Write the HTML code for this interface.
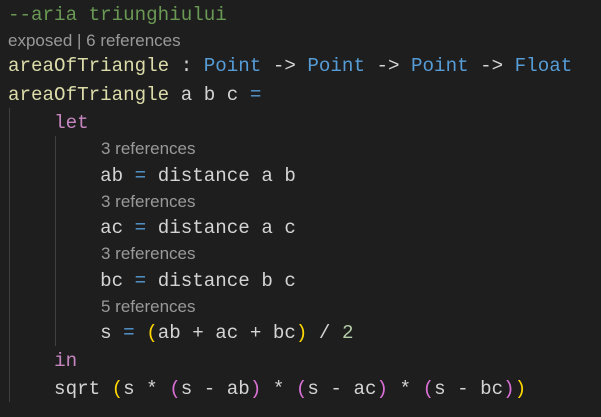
<!DOCTYPE html>
<html><head><style>
body{margin:0;background:#1e1e1e;width:601px;height:417px;overflow:hidden;position:relative}
.l{position:absolute;left:8px;font-family:"Liberation Mono",monospace;font-size:19.2px;white-space:pre;color:#d4d4d4;line-height:28px}
.c{position:absolute;font-family:"Liberation Sans",sans-serif;font-size:17px;color:#999;white-space:pre;line-height:20px}
.f{color:#dcdcaa}.t{color:#569cd6}.k{color:#c586c0}.cm{color:#6a9955}.n{color:#b5cea8}
.y{color:#ffd700}.p{color:#da70d6}.b{color:#179fff}
.g{position:absolute;width:1px;background:#404040}
</style></head><body>
<div class="g" style="left:9px;top:108px;height:294px"></div>
<div class="g" style="left:55px;top:136px;height:210px"></div>
<div class="l cm" style="top:1px">--aria triunghiului</div>
<div class="c" style="left:8px;top:31px">exposed | 6 references</div>
<div class="l" style="top:52px"><span class="f">areaOfTriangle</span> : <span class="t">Point</span> -&gt; <span class="t">Point</span> -&gt; <span class="t">Point</span> -&gt; <span class="t">Float</span></div>
<div class="l" style="top:81px"><span class="f">areaOfTriangle</span> a b c <span class="t">=</span></div>
<div class="l" style="top:109px">    <span class="k">let</span></div>
<div class="c" style="left:101px;top:139px">3 references</div>
<div class="l" style="top:162px">        ab <span class="t">=</span> distance a b</div>
<div class="c" style="left:101px;top:192px">3 references</div>
<div class="l" style="top:214px">        ac <span class="t">=</span> distance a c</div>
<div class="c" style="left:101px;top:244px">3 references</div>
<div class="l" style="top:267px">        bc <span class="t">=</span> distance b c</div>
<div class="c" style="left:101px;top:297px">5 references</div>
<div class="l" style="top:319px">        s <span class="t">=</span> <span class="y">(</span>ab + ac + bc<span class="y">)</span> / <span class="n">2</span></div>
<div class="l" style="top:347px">    <span class="k">in</span></div>
<div class="l" style="top:375px">    sqrt <span class="y">(</span>s * <span class="p">(</span>s - ab<span class="p">)</span> * <span class="p">(</span>s - ac<span class="p">)</span> * <span class="p">(</span>s - bc<span class="p">)</span><span class="y">)</span></div>
</body></html>
